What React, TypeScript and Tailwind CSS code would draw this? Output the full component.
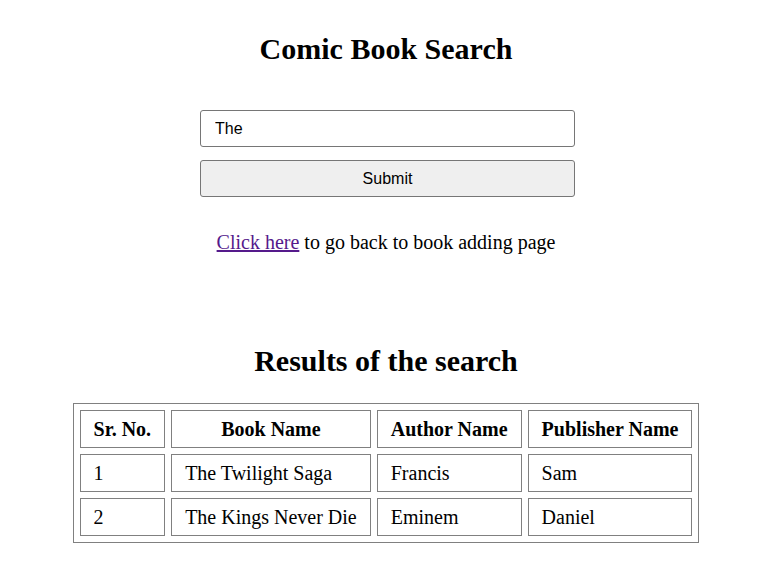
const rows = [
  { id: 1, book: "The Twilight Saga", author: "Francis", publisher: "Sam" },
  { id: 2, book: "The Kings Never Die", author: "Eminem", publisher: "Daniel" },
];

const App = () => {
  return (
    <div className="min-h-[585px] bg-white text-center font-['Liberation_Serif',serif] text-black">
      <h1 className="pt-[32px] text-[30px] leading-[34px] font-bold">Comic Book Search</h1>

      <form className="ml-[200px] mt-[44px] flex w-[375px] flex-col gap-[13px]" onSubmit={(e) => e.preventDefault()}>
        <input
          type="text"
          defaultValue="The"
          className="h-[37px] w-full rounded-[3px] border border-[#767676] bg-white px-[14px] font-['Liberation_Sans',sans-serif] text-[16px] text-black outline-none"
        />
        <button
          type="submit"
          className="h-[37px] w-full rounded-[3px] border border-[#767676] bg-[#efefef] font-['Liberation_Sans',sans-serif] text-[16px] text-black"
        >
          Submit
        </button>
      </form>

      <p className="mt-[34px] text-[20px] leading-[23px]">
        <a href="#" className="text-[#551a8b] underline">
          Click here
        </a>{" "}
        to go back to book adding page
      </p>

      <h2 className="mt-[90px] text-[30px] leading-[34px] font-bold">Results of the search</h2>

      <table className="mx-auto mt-[25px] border-separate border-spacing-[6px] border border-[#808080] text-[20px] leading-[22px]">
        <thead>
          <tr>
            <th className="border border-[#808080] px-[13px] py-[7px] text-center">Sr. No.</th>
            <th className="border border-[#808080] px-[13px] py-[7px] text-center">Book Name</th>
            <th className="border border-[#808080] px-[13px] py-[7px] text-center">Author Name</th>
            <th className="border border-[#808080] px-[13px] py-[7px] text-center">Publisher Name</th>
          </tr>
        </thead>
        <tbody>
          {rows.map((row) => (
            <tr key={row.id}>
              <td className="border border-[#808080] px-[13px] py-[7px] text-left">{row.id}</td>
              <td className="border border-[#808080] px-[13px] py-[7px] text-left">{row.book}</td>
              <td className="border border-[#808080] px-[13px] py-[7px] text-left">{row.author}</td>
              <td className="border border-[#808080] px-[13px] py-[7px] text-left">{row.publisher}</td>
            </tr>
          ))}
        </tbody>
      </table>
    </div>
  );
};

export default App;
